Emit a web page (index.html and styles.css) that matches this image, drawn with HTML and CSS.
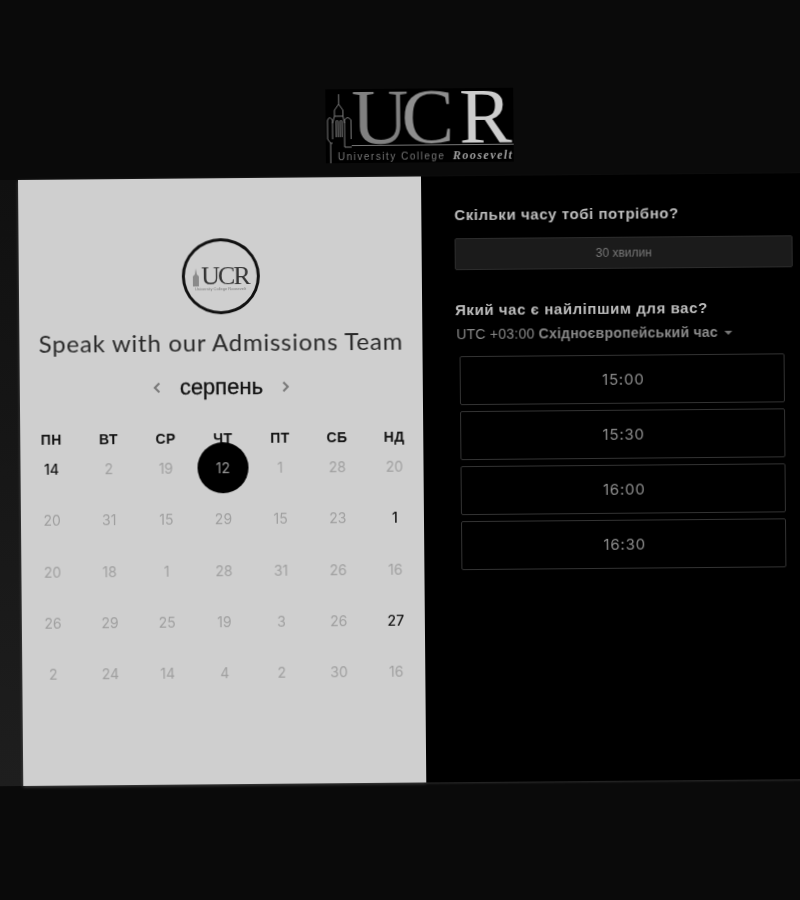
FILE: index.html
```html
<!DOCTYPE html>
<html lang="en">
<head>
    <meta charset="UTF-8">
    <title>Speak with our Admissions Team</title>
    <link rel="stylesheet" href="styles.css">
</head>
<body>
    <div class="page">
        <header class="top-bar">
            <div class="logo">
                <svg class="tower" viewBox="0 0 30 72" width="30" height="72">
                    <g fill="none" stroke="#7c7c7c" stroke-width="1">
                        <path d="M13.300 1V11M13.300 11L9 17V23M13.300 11L17.500 17V23M9 23H17.500"/>
                        <path d="M2 46V27Q4 22 7 27V46M19 46V27Q22 22 25.500 27V46"/>
                        <path d="M7 30L9 23M19 30L17.500 23"/>
                        <path d="M10.500 44V28Q11.500 26 12.500 28V44M14.500 44V28Q15.500 26 16.500 28V44"/>
                        <path d="M2 46L5 50H7M19 46V54H26"/>
                        <path d="M5 50V70"/>
                    </g>
                </svg>
                <div class="logo-mark"><span class="logo-u">U</span><span class="logo-c">C</span><span class="logo-r">R</span></div>
                <div class="logo-sub">University College <em>Roosevelt</em></div>
            </div>
        </header>

        <main class="booking">
            <section class="calendar-card">
                <div class="avatar">
                    <div class="avatar-top">
                        <svg width="8" height="18" viewBox="0 0 8 18"><path d="M4 0L3 6L1 8V18H7V8L5 6Z" fill="#8a8a8a"/></svg>
                        <span class="avatar-mark">UCR</span>
                    </div>
                    <div class="avatar-sub">University College Roosevelt</div>
                </div>
                <h1 class="card-title">Speak with our Admissions Team</h1>
                <div class="month-nav">
                    <svg width="10" height="12" viewBox="0 0 10 12"><path d="M7.500 1.500L3 6l4.500 4.500" fill="none" stroke="#777" stroke-width="2"/></svg>
                    <span class="month-name">серпень</span>
                    <svg width="10" height="12" viewBox="0 0 10 12"><path d="M2.500 1.500L7 6l-4.500 4.500" fill="none" stroke="#777" stroke-width="2"/></svg>
                </div>
                <div class="calendar">
                    <div class="dow">ПН</div><div class="dow">ВТ</div><div class="dow">СР</div><div class="dow">ЧТ</div><div class="dow">ПТ</div><div class="dow">СБ</div><div class="dow">НД</div>

                    <div class="day open">14</div><div class="day">2</div><div class="day">19</div><div class="day selected">12</div><div class="day">1</div><div class="day">28</div><div class="day">20</div>
                    <div class="day">20</div><div class="day">31</div><div class="day">15</div><div class="day">29</div><div class="day">15</div><div class="day">23</div><div class="day open">1</div>
                    <div class="day">20</div><div class="day">18</div><div class="day">1</div><div class="day">28</div><div class="day">31</div><div class="day">26</div><div class="day">16</div>
                    <div class="day">26</div><div class="day">29</div><div class="day">25</div><div class="day">19</div><div class="day">3</div><div class="day">26</div><div class="day open">27</div>
                    <div class="day">2</div><div class="day">24</div><div class="day">14</div><div class="day">4</div><div class="day">2</div><div class="day">30</div><div class="day">16</div>
                </div>
            </section>

            <section class="times">
                <h2 class="times-title">Скільки часу тобі потрібно?</h2>
                <div class="duration">30 хвилин</div>
                <h2 class="times-title best">Який час є найліпшим для вас?</h2>
                <div class="timezone">UTC +03:00 <b>Східноєвропейський час</b><span class="caret"></span></div>
                <div class="slots">
                    <div class="slot">15:00</div>
                    <div class="slot">15:30</div>
                    <div class="slot">16:00</div>
                    <div class="slot">16:30</div>
                </div>
            </section>
        </main>
    </div>
</body>
</html>
```

FILE: styles.css
```css
html, body {
    margin: 0;
    height: 900px;
    background-color: #0a0a0a;
    overflow: hidden;
}

body {
    font-family: "Liberation Sans", Arial, sans-serif;
}

/* the whole screenshot is grey, soft and tilted a little */
.page {
    width: 830px;
    margin-left: -12px;
    transform-origin: 30px 180px;
    transform: rotate(-0.5deg);
    filter: grayscale(1) blur(0.35px);
}

.top-bar {
    height: 180px;
    display: flex;
    justify-content: center;
    box-sizing: border-box;
    padding: 92px 0 0 34px;
}

.logo {
    position: relative;
    background-color: #000;
    width: 188px;
    height: 74px;
}

.tower {
    position: absolute;
    left: 0;
    top: 4px;
}

.logo-mark {
    font-family: "Liberation Serif", serif;
    font-size: 79px;
    line-height: 55px;
    height: 56px;
    white-space: nowrap;
    border-bottom: 1px solid #777;
    margin-left: 26px;
}

.logo-u { color: #808080; letter-spacing: -7px; }
.logo-c { color: #8e8e8e; }
.logo-r { color: #cdcdcd; margin-left: 5px; }

.logo-sub {
    font-size: 10px;
    letter-spacing: 1.5px;
    color: #777;
    margin: 3px 0 0 12px;
    white-space: nowrap;
}

.logo-sub em {
    font-family: "Liberation Serif", serif;
    font-weight: bold;
    font-size: 12px;
    letter-spacing: 1.5px;
    margin-left: 3px;
    color: #a0a0a0;
}

.booking {
    display: flex;
    height: 606px;
    padding-left: 30px;
    background: linear-gradient(#101010, #1e1e1e);
}

.calendar-card {
    width: 403px;
    flex: none;
    box-sizing: border-box;
    background-color: #cfcfcf;
    box-shadow: 0 1px 3px rgba(255, 255, 255, 0.25);
    padding-top: 60px;
    display: flex;
    flex-direction: column;
    align-items: center;
}

.avatar {
    width: 78px;
    height: 76px;
    box-sizing: border-box;
    border: 3px solid #111;
    border-radius: 50%;
    display: flex;
    flex-direction: column;
    align-items: center;
    justify-content: center;
}

.avatar-top {
    display: flex;
    align-items: flex-end;
    gap: 1px;
    height: 20px;
    margin-top: 4px;
}

.avatar-mark {
    font-family: "Liberation Serif", serif;
    font-size: 26px;
    line-height: 20px;
    letter-spacing: -2px;
    color: #333;
}

.avatar-sub {
    font-size: 4px;
    line-height: 5px;
    color: #777;
    white-space: nowrap;
}

.card-title {
    font-family: "Lato", "Liberation Sans", sans-serif;
    font-weight: 400;
    font-size: 24px;
    letter-spacing: 0.75px;
    line-height: 30px;
    color: #2a2a2a;
    margin: 13px 0 0;
    white-space: nowrap;
}

.month-nav {
    display: flex;
    align-items: center;
    gap: 16px;
    margin-top: 16px;
    height: 28px;
}

.month-name {
    font-size: 22px;
    color: #111;
    -webkit-text-stroke: 0.3px #111;
    padding: 0 2px;
}

.calendar {
    width: 400px;
    margin-top: 33px;
    display: grid;
    grid-template-columns: repeat(7, 1fr);
    grid-auto-rows: 51.250px;
    grid-template-rows: 8px;
    justify-items: center;
    align-items: center;
    position: relative;
    left: 1px;
}

.dow {
    font-weight: bold;
    font-size: 14px;
    letter-spacing: 0.4px;
    color: #111;
    height: 20px;
    line-height: 20px;
}

.day {
    font-family: "Inter", "Liberation Sans", sans-serif;
    font-size: 14px;
    color: #a0a0a0;
    width: 51px;
    height: 51px;
    line-height: 51px;
    text-align: center;
    border-radius: 50%;
}

.day.open {
    color: #111;
    font-weight: 500;
}

.day.selected {
    position: relative;
    background-color: #000;
    color: #999;
}

.times {
    flex: 1;
    background-color: #000;
    padding: 29px 0 0 33px;
    box-shadow: 0 1px 2px rgba(255, 255, 255, 0.15);
}

.times-title {
    font-size: 15px;
    font-weight: bold;
    letter-spacing: 0.57px;
    line-height: 20px;
    color: #bdbdbd;
    margin: 0;
}

.duration {
    width: 338px;
    height: 32px;
    box-sizing: border-box;
    margin-top: 13px;
    background-color: #1b1b1b;
    border: 1px solid #2c2c2c;
    border-radius: 2px;
    color: #777;
    font-size: 12px;
    line-height: 30px;
    text-align: center;
}

.times-title.best {
    margin-top: 30px;
}

.timezone {
    font-size: 14px;
    letter-spacing: 0.23px;
    line-height: 18px;
    color: #8a8a8a;
    margin-top: 5px;
    padding-left: 1px;
}

.caret {
    display: inline-block;
    width: 0;
    height: 0;
    margin-left: 6px;
    vertical-align: 2px;
    border-left: 4px solid transparent;
    border-right: 4px solid transparent;
    border-top: 4px solid #777;
}

.slots {
    display: flex;
    flex-direction: column;
    gap: 6px;
    width: 325px;
    margin: 13px 0 0 4px;
}

.slot {
    height: 49px;
    box-sizing: border-box;
    border: 1px solid #333;
    border-radius: 2px;
    padding-left: 2px;
    color: #8f8f8f;
    font-family: "Inter", "Liberation Sans", sans-serif;
    font-size: 15px;
    letter-spacing: 0.8px;
    line-height: 47px;
    text-align: center;
}
```
